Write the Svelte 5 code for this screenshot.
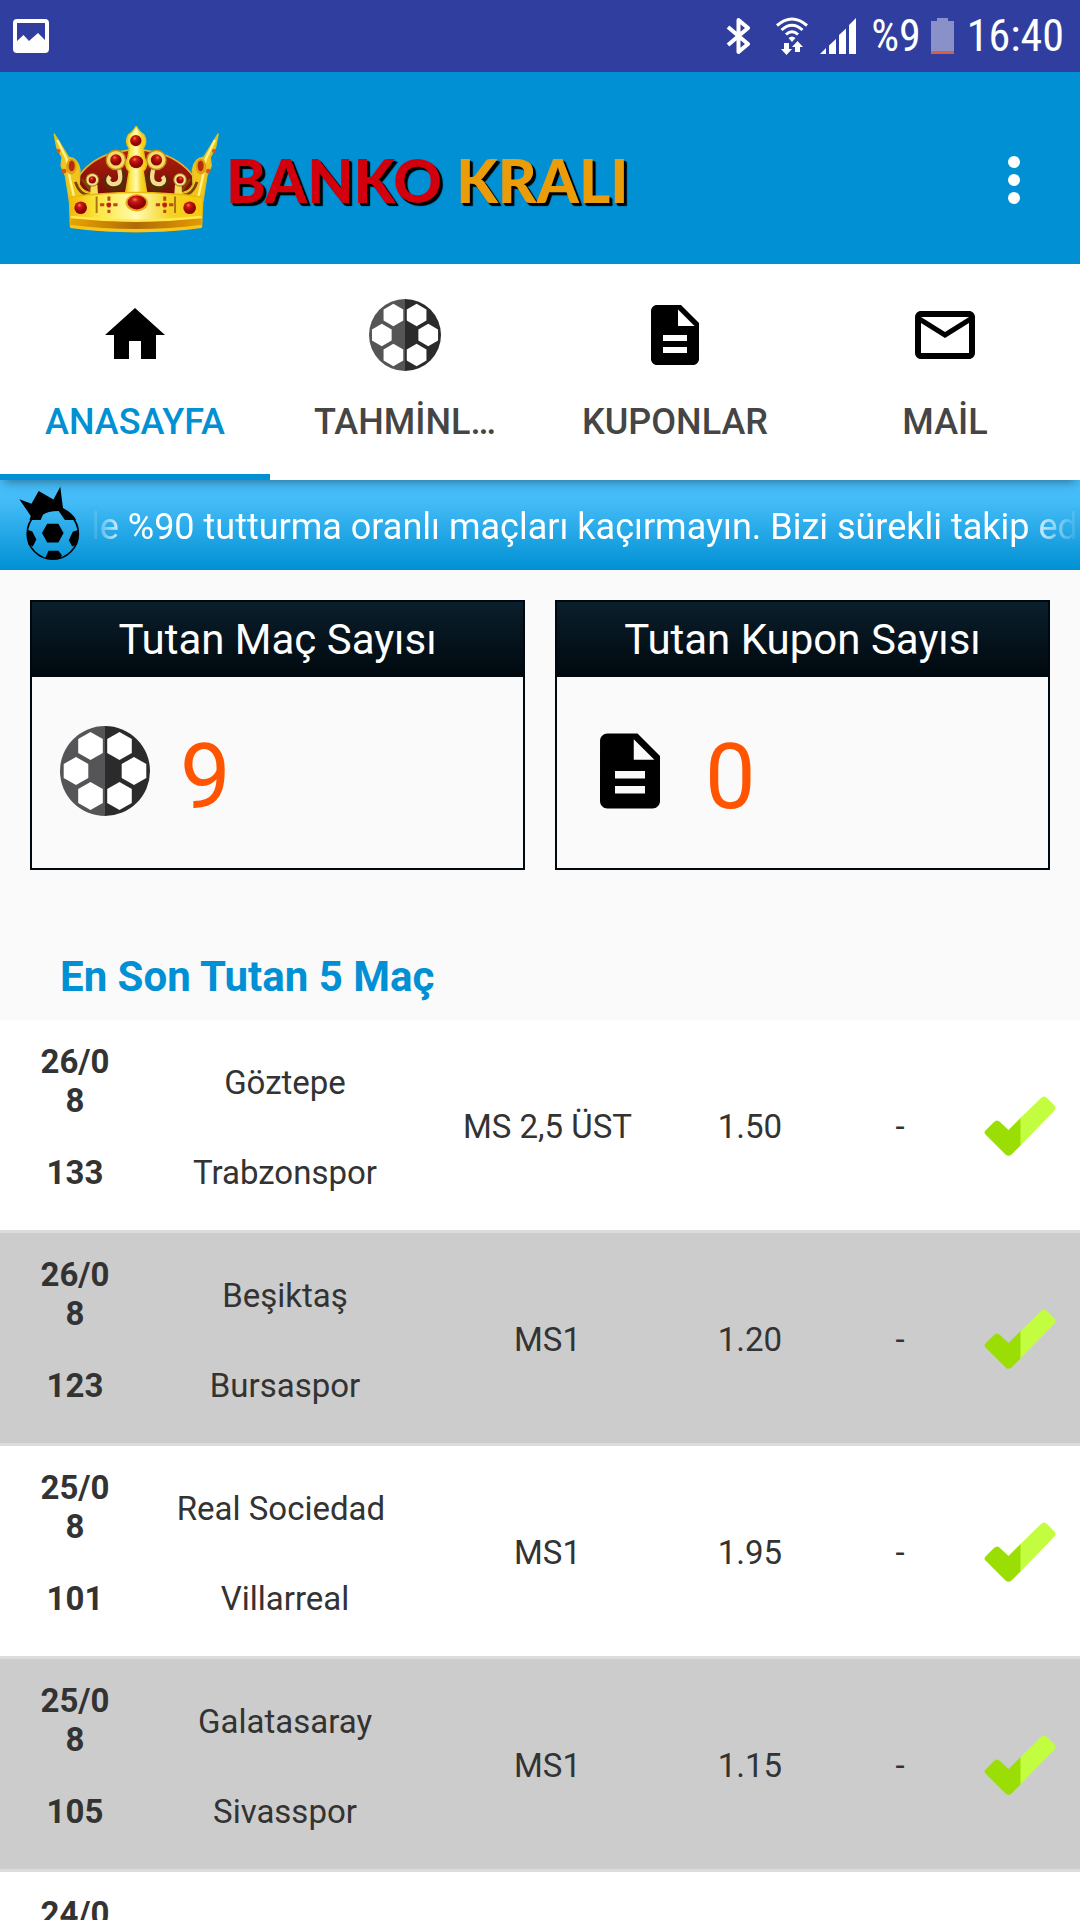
<script>
  const tabs = [
    { id: 'home', label: 'ANASAYFA' },
    { id: 'ball', label: 'TAHMİNL…' },
    { id: 'doc', label: 'KUPONLAR' },
    { id: 'mail', label: 'MAİL' }
  ];
  let active = $state('home');

  const stats = [
    { icon: 'ball', title: 'Tutan Maç Sayısı', value: 9 },
    { icon: 'doc', title: 'Tutan Kupon Sayısı', value: 0 }
  ];

  const matches = [
    { date: '26/08', code: '133', home: 'Göztepe', away: 'Trabzonspor', tip: 'MS 2,5 ÜST', odds: '1.50', score: '-', won: true },
    { date: '26/08', code: '123', home: 'Beşiktaş', away: 'Bursaspor', tip: 'MS1', odds: '1.20', score: '-', won: true },
    { date: '25/08', code: '101', home: 'Real Sociedad\u00a0', away: 'Villarreal', tip: 'MS1', odds: '1.95', score: '-', won: true },
    { date: '25/08', code: '105', home: 'Galatasaray', away: 'Sivasspor', tip: 'MS1', odds: '1.15', score: '-', won: true },
    { date: '24/08', code: '', home: '', away: '', tip: '', odds: '', score: '', won: false }
  ];

  const panels = [[30.5, 20], [59.5, 20], [16, 45], [74, 45], [30.5, 70], [59.5, 70]];
</script>

{#snippet icon(name)}
  {#if name === 'ball'}
    <svg class="icon" viewBox="0 0 90 90" aria-hidden="true">
      <path d="M45 0A45 45 0 0 0 45 90Z" fill="#555558" />
      <path d="M45 0A45 45 0 0 1 45 90Z" fill="#2b2b2b" />
      {#each panels as [x, y]}
        <path d="M0-14 12.3-7V7L0 14-12.3 7V-7Z" transform="translate({x} {y})" fill="#fff" />
      {/each}
    </svg>
  {:else if name === 'home'}
    <svg class="icon" viewBox="0 0 24 24" aria-hidden="true"><path d="M10 20v-6h4v6h5v-8h3L12 3 2 12h3v8z" /></svg>
  {:else if name === 'doc'}
    <svg class="icon" viewBox="0 0 24 24" aria-hidden="true">
      <path d="M14 2H6c-1.1 0-1.99.9-1.99 2L4 20c0 1.1.89 2 1.99 2H18c1.1 0 2-.9 2-2V8l-6-6zm2 16H8v-2h8v2zm0-4H8v-2h8v2zm-3-5V3.5L18.5 9H13z" />
    </svg>
  {:else}
    <svg class="icon" viewBox="0 0 24 24" aria-hidden="true">
      <path d="M20 4H4c-1.1 0-1.99.9-1.99 2L2 18c0 1.1.9 2 2 2h16c1.1 0 2-.9 2-2V6c0-1.1-.9-2-2-2zm0 14H4V8l8 5 8-5v10zm-8-7L4 6h16l-8 5z" />
    </svg>
  {/if}
{/snippet}

<div class="app">
  <div class="status">
    <svg class="photo" viewBox="0 0 36 34" aria-hidden="true">
      <path fill-rule="evenodd" d="M4 0h28q4 0 4 4v26q0 4-4 4H4q-4 0-4-4V4q0-4 4-4zM4 4v18l6.500-6L16 22l9-8 7 7V4z" fill="#fff" />
    </svg>
    <svg class="bluetooth" viewBox="0 0 24 38" aria-hidden="true">
      <path d="M2 10 22 27 12.500 35V3L22 11 2 28" fill="none" stroke="#fff" stroke-width="4" stroke-linejoin="round" />
    </svg>
    <svg class="wifi" viewBox="0 0 32 38" aria-hidden="true">
      <g fill="none" stroke="#fff" stroke-width="3">
        <path d="M1 8.500Q16-4.500 31 8.500" />
        <path d="M5.500 13Q16 3.500 26.500 13" />
        <path d="M10 17.500Q16 12 22 17.500" />
      </g>
      <path d="M12.500 21Q16 18 19.500 21L16 25z" fill="#fff" />
      <path d="M8 26h5v6h3l-5.500 6L5 32h3zM19 35v-5h-3l5.500-6 5.500 6h-3v5z" fill="#fff" />
    </svg>
    <svg class="signal" viewBox="0 0 36 36" aria-hidden="true">
      <path d="M0 36 6 30V36zM9 27.500 16 21V36H9zM19 17 26 10.500V36H19zM29 7 36 0V36H29z" fill="#fff" />
    </svg>
    <span>%9</span>
    <svg class="battery" viewBox="0 0 23 36" aria-hidden="true">
      <path d="M6 0h11v3h6v30H0V3h6z" fill="#8a90c8" /><path d="M0 33h23v3H0z" fill="#d9603f" />
    </svg>
    <time>16:40</time>
  </div>

  <header>
    <svg class="crown" viewBox="160 380 500 325" aria-hidden="true">
      <defs>
        <linearGradient id="gold" x1="0" x2="1">
          <stop offset="0" stop-color="#f2b705" /><stop offset=".2" stop-color="#fbe53a" />
          <stop offset=".5" stop-color="#fffbb0" /><stop offset=".75" stop-color="#f6d322" />
          <stop offset="1" stop-color="#f9c80a" />
        </linearGradient>
        <linearGradient id="rim" x1="0" x2="1">
          <stop offset="0" stop-color="#e8a400" /><stop offset=".5" stop-color="#b06a08" /><stop offset="1" stop-color="#e39b00" />
        </linearGradient>
        <linearGradient id="velvet" x1="0" x2="0" y2="1">
          <stop offset="0" stop-color="#b3200c" /><stop offset="1" stop-color="#6e0a05" />
        </linearGradient>
        <radialGradient id="gem" cx=".4" cy=".3">
          <stop offset="0" stop-color="#f47a5c" /><stop offset=".35" stop-color="#cf1712" /><stop offset="1" stop-color="#8e0505" />
        </radialGradient>
      </defs>
      <path d="M228 545Q262 484 335 462L409 448 482 462Q556 488 590 545L582 605H236z" fill="url(#velvet)" stroke="#e9b32a" stroke-width="5" />
      <g id="side">
        <path d="M162 403 206 474Q236 478 240 512L238 556Q252 584 286 580L286 606H208L196 530 183 500 186 474 170 445z" fill="#f3c51c" stroke="#d8c22c" stroke-width="4" />
        <path d="M172 422 200 480 210 540 222 592" fill="none" stroke="#fff38a" stroke-width="7" />
        <path d="M226 548Q240 592 276 588M246 540Q262 560 274 578" fill="none" stroke="#7c4207" stroke-width="8" />
        <ellipse cx="214" cy="502" rx="16" ry="24" fill="#e2a112" /><ellipse cx="215" cy="500" rx="9" ry="16" fill="#b92a0b" />
        <circle cx="175" cy="455" r="6" fill="#d4571b" /><circle cx="192" cy="516" r="7" fill="#d4571b" />
        <path d="M272 556h20l3 36h-24z" fill="#f7dc55" />
        <circle cx="277" cy="542" r="19" fill="#f3e08a" stroke="#a67012" stroke-width="3" /><circle cx="277" cy="542" r="11" fill="url(#gem)" />
        <circle cx="348" cy="482" r="29" fill="#f4db63" stroke="#c58a17" stroke-width="4" /><circle cx="348" cy="482" r="17" fill="url(#gem)" />
        <path d="M366 514Q382 578 334 564 304 548 330 534" fill="none" stroke="#5a2a08" stroke-width="20" />
        <path d="M358 512Q370 560 334 554 318 546 330 532" fill="none" stroke="#f3dc8d" stroke-width="13" />
      </g>
      <use href="#side" transform="matrix(-1 0 0 1 818 0)" />
      <path d="M409 380Q420 400 432 406 445 428 430 448L434 475Q448 500 430 516L442 588H376L388 516Q370 500 384 475L388 448Q373 428 386 406 398 400 409 380z" fill="url(#gold)" stroke="#e3be2a" stroke-width="4" />
      <circle cx="408" cy="424" r="17" fill="url(#gem)" /><ellipse cx="409" cy="488" rx="21" ry="19" fill="url(#gem)" />
      <path d="M208 594Q409 566 610 594L606 682Q409 714 211 682z" fill="url(#gold)" stroke="#e8b90e" stroke-width="4" />
      <path d="M213 652Q409 682 605 652L606 684Q409 716 211 684z" fill="url(#rim)" />
      <path d="M211 682Q409 708 606 682" fill="none" stroke="#f6c61c" stroke-width="10" />
      <path d="M212 654Q409 676 606 654" fill="none" stroke="#ffe94f" stroke-width="8" />
      <path d="M290 592v50M526 592v50" stroke="#a97514" stroke-width="6" />
      <path d="M327 592v50M300 617h54M495 592v50M468 617h54" stroke="#bb4a12" stroke-width="9" stroke-dasharray="13 7" />
      <circle cx="327" cy="617" r="7" fill="#b8210e" /><circle cx="495" cy="617" r="7" fill="#b8210e" />
      <ellipse cx="411" cy="611" rx="34" ry="26" fill="#f1a51a" /><ellipse cx="411" cy="610" rx="28" ry="21" fill="url(#gem)" />
      <circle cx="242" cy="626" r="19" fill="url(#gem)" /><circle cx="570" cy="626" r="19" fill="url(#gem)" />
    </svg>
    <h1><span class="red">BANKO</span> <span class="amber">KRALI</span></h1>
    <button class="more" aria-label="Menü">
      <svg class="icon" viewBox="0 0 24 24" aria-hidden="true"><circle cx="12" cy="6" r="2" /><circle cx="12" cy="12" r="2" /><circle cx="12" cy="18" r="2" /></svg>
    </button>
  </header>

  <nav>
    {#each tabs as tab}
      <button class:active={active === tab.id} onclick={() => (active = tab.id)}>
        {@render icon(tab.id)}
        <span>{tab.label}</span>
      </button>
    {/each}
  </nav>

  <div class="ticker">
    <svg class="crest" viewBox="26 30 186 226" aria-hidden="true">
      <circle cx="129" cy="174" r="78" fill="none" stroke="#000" stroke-width="5" />
      <path d="M27 69 64 83 86 44 131 70 152 31 160 96Q190 112 200 132H166L147 105Q112 106 99 116L92 132H58L62 120z" />
      <path d="M96 172 112 144H146L162 172 146 201H112zM50 162 66 167 79 192 68 213 54 206zM208 162 190 168 178 194 188 213 203 206zM106 248 116 226H146L157 240 152 250Q129 256 106 248z" />
    </svg>
    <p>le %90 tutturma oranlı maçları kaçırmayın. Bizi sürekli takip ed</p>
  </div>

  <main>
    <section class="cards">
      {#each stats as stat}
        <article>
          <h2>{stat.title}</h2>
          <div class="stat">
            {@render icon(stat.icon)}
            <strong>{stat.value}</strong>
          </div>
        </article>
      {/each}
    </section>

    <h2 class="title">En Son Tutan 5 Maç</h2>

    <table>
      <colgroup>
        <col class="c-date" /><col class="c-teams" /><col class="c-tip" /><col class="c-odds" /><col class="c-score" /><col class="c-mark" />
      </colgroup>
      <tbody>
        {#each matches as m}
          <tr>
            <td class="date"><div>{m.date}</div><div class="code">{m.code}</div></td>
            <td class="teams"><div>{m.home}</div><div>{m.away}</div></td>
            <td>{m.tip}</td>
            <td>{m.odds}</td>
            <td>{m.score}</td>
            <td>
              {#if m.won}
                <svg class="tick" viewBox="0 0 72 60" role="img" aria-label="Tuttu">
                  <path d="M2 34 10 26Q13 23 16 26L24.500 34 37 21.500V49L27.500 58.500Q24.500 61 21.500 58.500L2 39Q-1 36.500 2 34z" fill="#9ade06" />
                  <path d="M36.500 22 57 2Q60-1 63 2L70 9Q73 12 70 15L36.500 49.500z" fill="#c2fd3f" />
                </svg>
              {/if}
            </td>
          </tr>
        {/each}
      </tbody>
    </table>
  </main>
</div>

<style>
  :global(body) {
    margin: 0;
    background: #fafafa;
    font-family: Roboto, 'Noto Sans', sans-serif;
    color: #333;
  }
  .app {
    display: flex;
    flex-direction: column;
    height: 100vh;
    overflow: hidden;
  }
  h1, h2, p { margin: 0; font-weight: 400; }
  button {
    border: 0;
    padding: 0;
    background: none;
    font: inherit;
    color: inherit;
  }
  svg { display: block; flex: none; }
  .icon { width: 72px; height: 72px; }

  .status {
    flex: none;
    display: flex;
    align-items: center;
    box-sizing: border-box;
    height: 72px;
    padding: 0 16px 0 13px;
    background: #303f9f;
    color: #fff;
    font-family: 'Roboto Condensed', Roboto, sans-serif;
    font-size: 44px;
    line-height: 52px;
  }
  .photo { width: 36px; height: 34px; margin-right: auto; }
  .bluetooth { width: 24px; height: 38px; margin-right: 26px; }
  .wifi { width: 32px; height: 38px; margin-right: 12px; }
  .signal { width: 36px; height: 36px; margin-right: 15px; }
  .battery { width: 23px; height: 36px; margin: 0 13px 0 10px; }

  header {
    flex: none;
    display: flex;
    align-items: center;
    height: 168px;
    padding: 24px 30px 0 53px;
    background: #0090d3;
  }
  .crown { width: 167px; height: 108px; margin-right: 6px; }
  h1 {
    font-family: Lato, sans-serif;
    font-weight: 900;
    font-size: 60px;
    line-height: 72px;
    text-shadow: 2px 2px 1px #000, 3px 3px 1px #000;
  }
  .red { color: #d2000c; }
  .amber { color: #ea9c0a; }
  .more { margin-left: auto; fill: #fff; }

  nav {
    flex: none;
    display: grid;
    grid-template-columns: repeat(4, minmax(0, 1fr));
    position: relative;
    z-index: 1;
    background: #fff;
    box-shadow: 0 6px 10px -4px rgba(0, 0, 0, 0.4);
  }
  nav button {
    display: flex;
    flex-direction: column;
    align-items: center;
    gap: 30px;
    padding: 35px 36px 31px;
    border-bottom: 6px solid transparent;
    color: #454545;
    font-weight: 500;
    font-size: 36px;
    line-height: 42px;
  }
  nav span {
    max-width: 100%;
    overflow: hidden;
    text-overflow: ellipsis;
    white-space: nowrap;
  }
  nav .active { color: #0090d3; border-color: #0090d3; }

  .ticker {
    flex: none;
    display: flex;
    align-items: flex-start;
    box-sizing: border-box;
    height: 90px;
    padding: 6px 0 0 19px;
    background: linear-gradient(#48bffb, #43bbf7 25%, #0090d3);
    color: #fff;
  }
  .crest { width: 61px; height: 75px; margin-right: 11px; }
  .ticker p {
    flex: 1;
    min-width: 0;
    margin-top: 20px;
    overflow: hidden;
    white-space: nowrap;
    font-size: 36px;
    line-height: 42px;
    mask-image: linear-gradient(to right, transparent, #000 36px, #000 calc(100% - 54px), transparent);
  }

  .cards {
    display: grid;
    grid-template-columns: repeat(2, minmax(0, 1fr));
    gap: 30px;
    padding: 30px 30px 82px;
  }
  article { border: 2px solid #000810; }
  article h2 {
    padding: 13px 0 12px;
    background: linear-gradient(#0a1f2c, #01080e);
    color: #fff;
    font-size: 42px;
    line-height: 50px;
    text-align: center;
  }
  .stat {
    display: flex;
    align-items: center;
    gap: 30px;
    padding: 39px 28px 42px;
  }
  .stat .icon { width: 90px; height: 90px; }
  .stat strong {
    padding-top: 14px;
    color: #ff5500;
    font-weight: 400;
    font-size: 90px;
    line-height: 96px;
  }

  .title {
    padding: 0 60px 18px;
    color: #0090d3;
    font-weight: 700;
    font-size: 42px;
    line-height: 50px;
  }

  table {
    width: 100%;
    table-layout: fixed;
    border-collapse: separate;
    border-spacing: 0;
    font-size: 33px;
    line-height: 39px;
    text-align: center;
  }
  .c-date { width: 135px; }
  .c-teams { width: 300px; }
  .c-tip { width: 225px; }
  .c-odds { width: 180px; }
  .c-score, .c-mark { width: 120px; }
  tr { background: #fff; }
  tr:nth-child(even) { background: #ccc; }
  td {
    box-sizing: border-box;
    height: 213px;
    padding: 2px 0 0;
    border-bottom: 3px solid #dcdcdc;
  }
  .date {
    padding: 21px 22px 38px 37px;
    font-weight: 700;
    overflow-wrap: anywhere;
  }
  .code { min-height: 39px; margin-top: 33px; }
  .teams, .date { vertical-align: bottom; }
  .teams { padding-bottom: 38px; }
  .teams div { min-height: 39px; }
  .teams div + div { margin-top: 51px; }
  .tick { width: 72px; height: 60px; margin: 0 auto; }
</style>
